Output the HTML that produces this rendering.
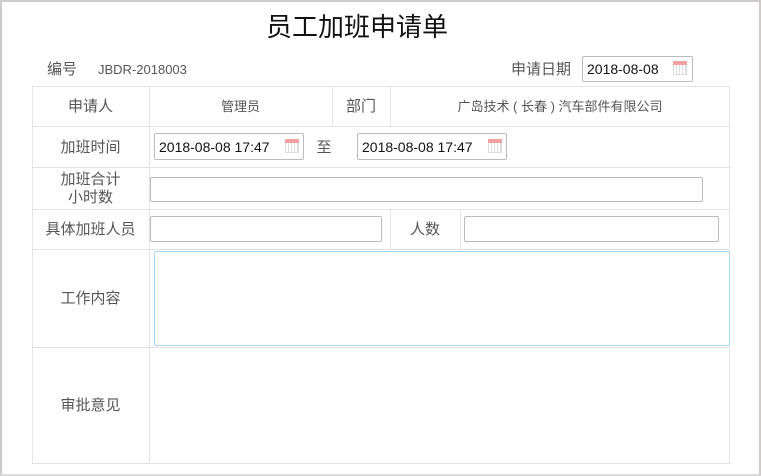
<!DOCTYPE html>
<html><head><meta charset="utf-8"><style>
*{margin:0;padding:0;box-sizing:border-box}
body{width:761px;height:476px;background:#fff;font-family:"Liberation Sans","Noto Sans CJK SC",sans-serif;color:#555;position:relative;overflow:hidden}
.frame{position:absolute;left:0;top:0;width:761px;height:476px;border:2px solid #cfcbcb;border-bottom-color:#dcdcdc}
.a{position:absolute}
.t{position:absolute;font-size:14px;text-align:center;display:flex;align-items:center;justify-content:center;line-height:18px}
.hl{position:absolute;height:1px;background:#e3e3e3}
.vl{position:absolute;width:1px;background:#e3e3e3}
.inp{position:absolute;border:1px solid #bbb;border-radius:2px;background:#fff;font-size:14px;color:#111;padding-left:4px;display:flex;align-items:center}
.cal{position:absolute;width:14px;height:14px;border:1px solid #ddd;background:repeating-linear-gradient(90deg,#fff 0 2px,#ddd 2px 3px)}
.cal:before{content:"";position:absolute;left:-1px;top:-1px;width:14px;height:4px;background:#f2a0a0}
</style></head><body>
<div class="frame"></div>
<div class="t" style="left:217px;width:280px;top:12px;height:30px;font-size:26px;color:#111">员工加班申请单</div>
<div class="t" style="left:47px;top:60px;height:20px;font-size:15px">编号</div>
<div class="t" style="left:98px;top:60px;height:20px;font-size:13px">JBDR-2018003</div>
<div class="t" style="left:511px;top:60px;height:20px;font-size:15px">申请日期</div>
<div class="inp" style="left:582px;top:56px;width:111px;height:26px">2018-08-08</div><div class="cal" style="left:673px;top:61px"></div>

<div class="a" style="left:32px;top:86px;width:698px;height:378px;border:1px solid #e3e3e3"></div>
<div class="hl" style="left:32px;top:126px;width:698px"></div>
<div class="hl" style="left:32px;top:167px;width:698px"></div>
<div class="hl" style="left:32px;top:209px;width:698px"></div>
<div class="hl" style="left:32px;top:249px;width:698px"></div>
<div class="hl" style="left:32px;top:347px;width:698px"></div>
<div class="vl" style="left:149px;top:86px;height:378px"></div>
<div class="vl" style="left:332px;top:86px;height:41px"></div>
<div class="vl" style="left:390px;top:86px;height:41px"></div>
<div class="vl" style="left:390px;top:209px;height:41px"></div>
<div class="vl" style="left:460px;top:209px;height:41px"></div>

<div class="t" style="left:32px;width:117px;top:86px;height:41px;font-size:15px">申请人</div>
<div class="t" style="left:149px;width:183px;top:86px;height:41px;font-size:13px">管理员</div>
<div class="t" style="left:332px;width:58px;top:86px;height:41px;font-size:15px">部门</div>
<div class="t" style="left:390px;width:340px;top:86px;height:41px;font-size:13px;white-space:pre">广岛技术 ( 长春 ) 汽车部件有限公司</div>

<div class="t" style="left:32px;width:117px;top:127px;height:41px;font-size:15px">加班时间</div>
<div class="inp" style="left:154px;top:133px;width:150px;height:27px">2018-08-08 17:47</div><div class="cal" style="left:285px;top:139px"></div>
<div class="t" style="left:310px;width:28px;top:127px;height:41px;font-size:15px">至</div>
<div class="inp" style="left:357px;top:133px;width:150px;height:27px">2018-08-08 17:47</div><div class="cal" style="left:488px;top:139px"></div>

<div class="t" style="left:32px;width:117px;top:168px;height:42px;font-size:15px">加班合计<br>小时数</div>
<div class="inp" style="left:150px;top:177px;width:553px;height:25px"></div>

<div class="t" style="left:32px;width:117px;top:210px;height:40px;font-size:15px">具体加班人员</div>
<div class="inp" style="left:150px;top:216px;width:232px;height:26px"></div>
<div class="t" style="left:390px;width:70px;top:210px;height:40px;font-size:15px">人数</div>
<div class="inp" style="left:464px;top:216px;width:255px;height:26px"></div>

<div class="t" style="left:32px;width:117px;top:250px;height:97px;font-size:15px">工作内容</div>
<div class="inp" style="left:154px;top:251px;width:576px;height:95px;border-color:#a9d8f5"></div>

<div class="t" style="left:32px;width:117px;top:348px;height:116px;font-size:15px">审批意见</div>
</body></html>
